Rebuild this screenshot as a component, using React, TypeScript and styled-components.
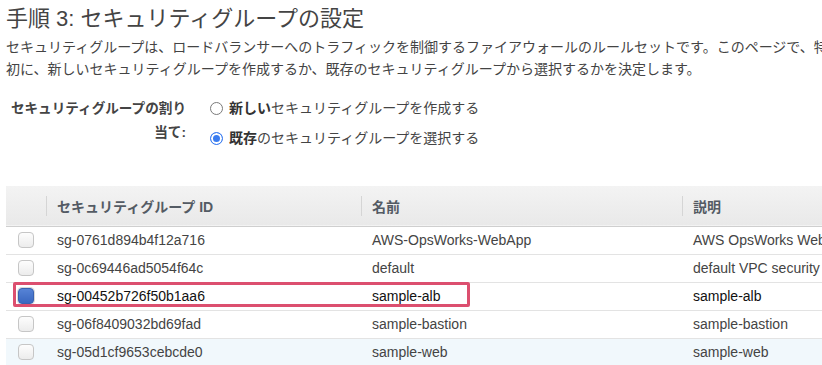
import React from 'react';
import styled, { createGlobalStyle } from 'styled-components';

const GlobalStyle = createGlobalStyle`
  body {
    margin: 0;
    overflow: hidden;
    background: #fff;
    font-family: "Liberation Sans", "Noto Sans CJK JP", sans-serif;
    color: #444;
  }
`;

type SecurityGroup = {
  id: string;
  name: string;
  description: string;
  selected?: boolean;
  hovered?: boolean;
};

const groups: SecurityGroup[] = [
  { id: 'sg-0761d894b4f12a716', name: 'AWS-OpsWorks-WebApp', description: 'AWS OpsWorks WebApp - security group' },
  { id: 'sg-0c69446ad5054f64c', name: 'default', description: 'default VPC security group' },
  { id: 'sg-00452b726f50b1aa6', name: 'sample-alb', description: 'sample-alb', selected: true },
  { id: 'sg-06f8409032bd69fad', name: 'sample-bastion', description: 'sample-bastion' },
  { id: 'sg-05d1cf9653cebcde0', name: 'sample-web', description: 'sample-web', hovered: true },
];

const Page = styled.div`
  padding: 5px 0 0 6px;
  width: 1200px;
`;

const Title = styled.h1`
  margin: 0;
  font-size: 22px;
  line-height: 28px;
  font-weight: normal;
  color: #444;
`;

const Intro = styled.p`
  margin: 3px 0 0;
  font-size: 14px;
  line-height: 22px;
  white-space: nowrap;
`;

const AssignForm = styled.div`
  display: grid;
  grid-template-columns: 180px 1fr;
  column-gap: 24px;
  margin-top: 17px;
  font-size: 14px;
`;

const FieldLabel = styled.div`
  text-align: right;
  font-weight: bold;
  font-size: 13.6px;
  line-height: 24px;
  white-space: nowrap;
  color: #444;
`;

const Options = styled.div`
  display: flex;
  flex-direction: column;
  gap: 8px;
`;

const Option = styled.label`
  display: flex;
  align-items: center;
  gap: 6px;
  line-height: 22px;
  color: #444;

  b {
    color: #333;
  }
`;

const Radio = styled.span<{ checked?: boolean }>`
  width: 13px;
  height: 13px;
  box-sizing: border-box;
  border-radius: 50%;
  border: 1px solid ${(p) => (p.checked ? '#3a7cf0' : '#7a7a7a')};
  background: ${(p) => (p.checked ? '#3a7cf0' : '#fff')};
  box-shadow: ${(p) => (p.checked ? 'inset 0 0 0 2px #fff' : 'none')};
  flex-shrink: 0;
`;

const Table = styled.table`
  margin-top: 37px;
  border-collapse: collapse;
  table-layout: fixed;
  width: 1000px;
  font-size: 14px;
`;

const HeadRow = styled.tr`
  height: 40px;
  background: linear-gradient(#f3f3f3, #e9e9e9);
  border-bottom: 1px solid #cfcfcf;
`;

const HeadCell = styled.th<{ divider?: boolean }>`
  position: relative;
  text-align: left;
  font-weight: bold;
  color: #545b64;
  padding: 0 11px;

  &::before {
    content: '';
    display: ${(p) => (p.divider ? 'block' : 'none')};
    position: absolute;
    left: 0;
    top: 10px;
    bottom: 10px;
    width: 1px;
    background: #d5d5d5;
  }
`;

const Row = styled.tr<{ hovered?: boolean; selected?: boolean }>`
  height: 28px;
  border-bottom: 1px solid #e3e3e3;
  background: ${(p) => (p.hovered ? '#f1f8fc' : '#fff')};
  color: ${(p) => (p.selected ? '#111' : '#444')};
`;

const Cell = styled.td`
  position: relative;
  padding: 0 11px;
  white-space: nowrap;
  overflow: hidden;
`;

const CheckCell = styled.td`
  position: relative;
  padding: 0 0 0 12px;
`;

const Checkbox = styled.span<{ checked?: boolean }>`
  display: block;
  width: 16px;
  height: 16px;
  box-sizing: border-box;
  border-radius: 4px;
  border: 1px solid ${(p) => (p.checked ? '#3a62b0' : '#c6c6c6')};
  background: ${(p) =>
    p.checked ? 'linear-gradient(#5683d6, #3a67c0)' : 'linear-gradient(#fdfdfd, #ececec)'};
  box-shadow: ${(p) => (p.checked ? '0 0 0 1px #d9d9d9' : 'none')};
`;

const Highlight = styled.div`
  position: absolute;
  left: 7px;
  top: -1px;
  width: 457px;
  height: 25px;
  box-sizing: border-box;
  border: 3px solid #dc4f6f;
  border-radius: 2px;
  pointer-events: none;
`;

export default function App() {
  return (
    <>
      <GlobalStyle />
      <Page>
        <Title>手順 3: セキュリティグループの設定</Title>
        <Intro>
          セキュリティグループは、ロードバランサーへのトラフィックを制御するファイアウォールのルールセットです。このページで、特定のトラフィックを許可するルールを追加できます。最
          <br />
          初に、新しいセキュリティグループを作成するか、既存のセキュリティグループから選択するかを決定します。
        </Intro>

        <AssignForm>
          <FieldLabel>
            セキュリティグループの割り
            <br />
            当て:
          </FieldLabel>
          <Options>
            <Option>
              <Radio />
              <span>
                <b>新しい</b>セキュリティグループを作成する
              </span>
            </Option>
            <Option>
              <Radio checked />
              <span>
                <b>既存</b>のセキュリティグループを選択する
              </span>
            </Option>
          </Options>
        </AssignForm>

        <Table>
          <colgroup>
            <col style={{ width: 40 }} />
            <col style={{ width: 315 }} />
            <col style={{ width: 321 }} />
            <col />
          </colgroup>
          <thead>
            <HeadRow>
              <HeadCell />
              <HeadCell divider>セキュリティグループ ID</HeadCell>
              <HeadCell divider>名前</HeadCell>
              <HeadCell divider>説明</HeadCell>
            </HeadRow>
          </thead>
          <tbody>
            {groups.map((g) => (
              <Row key={g.id} hovered={g.hovered} selected={g.selected}>
                <CheckCell>
                  <Checkbox checked={g.selected} />
                  {g.selected ? <Highlight /> : null}
                </CheckCell>
                <Cell>{g.id}</Cell>
                <Cell>{g.name}</Cell>
                <Cell>{g.description}</Cell>
              </Row>
            ))}
          </tbody>
        </Table>
      </Page>
    </>
  );
}
